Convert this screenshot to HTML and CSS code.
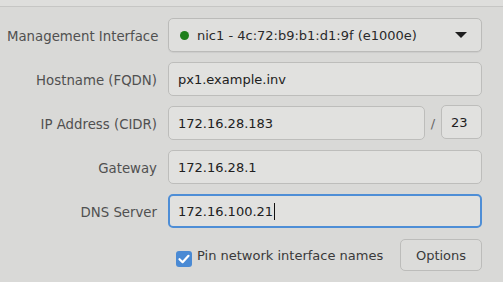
FILE: index.html
```html
<!DOCTYPE html>
<html>
<head>
<meta charset="utf-8">
<link rel="stylesheet" href="styles.css">
</head>
<body>
<div class="topbar"></div>
<div class="form">
  <label class="lbl">Management Interface</label>
  <div class="select">
    <span class="dot"></span>
    <span class="sel-text">nic1 - 4c:72:b9:b1:d1:9f (e1000e)</span>
    <span class="arrow"></span>
  </div>

  <label class="lbl">Hostname (FQDN)</label>
  <div class="input">px1.example.inv</div>

  <label class="lbl">IP Address (CIDR)</label>
  <div class="ip-row">
    <div class="input grow">172.16.28.183</div>
    <span class="slash">/</span>
    <div class="input cidr">23</div>
  </div>

  <label class="lbl">Gateway</label>
  <div class="input">172.16.28.1</div>

  <label class="lbl">DNS Server</label>
  <div class="input focus">172.16.100.21<span class="caret"></span></div>

  <span></span>
  <div class="bottom-row">
    <span class="check">
      <svg width="16" height="16" viewBox="0 0 16 16"><path d="M3.5 8.2 L6.6 11.2 L12.5 4.8" fill="none" stroke="#fff" stroke-width="2.2" stroke-linecap="round" stroke-linejoin="round"/></svg>
    </span>
    <span class="check-label">Pin network interface names</span>
    <span class="spacer"></span>
    <div class="btn">Options</div>
  </div>
</div>
</body>
</html>
```
FILE: styles.css
```css
html, body {
  margin: 0;
  padding: 0;
}
body {
  width: 503px;
  height: 282px;
  overflow: hidden;
  background: #d9d9d7;
  font-family: "DejaVu Sans", sans-serif;
  font-size: 13px;
  color: #2a2a2a;
}
.topbar {
  height: 6px;
  background: #dededc;
  border-bottom: 1px solid #c6c6c4;
}
.form {
  display: grid;
  grid-template-columns: 150px 1fr;
  column-gap: 11px;
  row-gap: 10px;
  padding: 11px 21px 0 7px;
  align-items: center;
}
.lbl {
  text-align: right;
  color: #505050;
  white-space: nowrap;
  font-size: 13.3px;
  padding-top: 2px;
}
.input, .select, .btn {
  box-sizing: border-box;
  height: 34px;
  border: 1px solid #bdbdbb;
  border-radius: 5px;
  background: #e1e1df;
  display: flex;
  align-items: center;
  padding-left: 9px;
  color: #202020;
  white-space: nowrap;
}
.select {
  background: #dfdfdd;
  border-color: #bbbbb9;
  box-shadow: 0 1px 1px rgba(0,0,0,0.06);
  padding-left: 11px;
}
.dot {
  width: 9px;
  height: 9px;
  border-radius: 50%;
  background: #1f7f1c;
  margin-right: 8px;
  flex: none;
}
.sel-text {
  flex: 1;
  color: #2a2a2a;
}
.arrow {
  width: 0;
  height: 0;
  border-left: 6px solid transparent;
  border-right: 6px solid transparent;
  border-top: 6px solid #1e1e1e;
  margin-right: 14px;
}
.ip-row {
  display: flex;
  align-items: center;
}
.grow {
  flex: 1;
}
.slash {
  width: 16px;
  text-align: center;
  color: #666;
}
.cidr {
  width: 41px;
  margin-top: -2px;
}
.focus {
  border: 2px solid #4e8ed6;
  padding-left: 8px;
}
.caret {
  display: inline-block;
  width: 1px;
  height: 17px;
  background: #111;
  margin-left: 1px;
}
.bottom-row {
  display: flex;
  align-items: center;
  height: 34px;
  padding-left: 8px;
}
.check {
  width: 16px;
  height: 16px;
  border-radius: 3px;
  background: #4a8ad4;
  display: flex;
  margin-top: 8px;
  margin-right: 5px;
}
.check-label {
  color: #3a3a3a;
  margin-top: 1px;
}
.spacer {
  flex: 1;
}
.btn {
  width: 82px;
  height: 32px;
  justify-content: center;
  padding: 0;
  color: #3a3a3a;
  background: #dcdcda;
  border-color: #bcbcba;
}
```
